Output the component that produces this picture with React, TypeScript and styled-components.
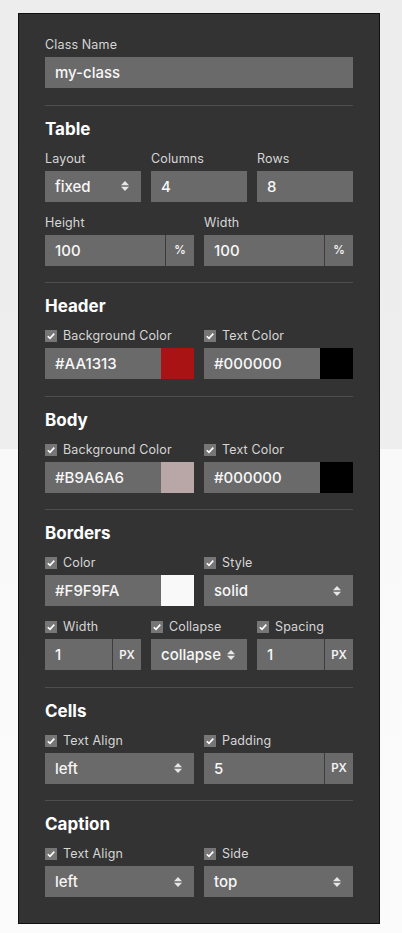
import React from "react";
import styled, { createGlobalStyle } from "styled-components";

const Global = createGlobalStyle`
  html, body { margin: 0; padding: 0; }
  body {
    font-family: Inter, "Noto Sans", Arial, sans-serif;
    background: linear-gradient(to bottom, #ededee 0, #eeeeef 449px, #f9f9f9 449px, #fbfbfb 100%);
    min-height: 933px;
  }
  * { box-sizing: border-box; }
`;

const Page = styled.div`
  padding: 13px 0 9px 18px;
`;

const Panel = styled.div`
  width: 362px;
  background: #333333;
  border: 1px solid #111;
  padding: 23px 26px 26px 26px;
  display: flex;
  flex-direction: column;
`;

const Section = styled.section`
  display: flex;
  flex-direction: column;
`;

const Divider = styled.hr`
  border: none;
  height: 1px;
  background: #4e4e4e;
  margin: 16.5px 0 12px;
  width: 100%;
`;

const Heading = styled.h2`
  margin: 0 0 11px;
  font-size: 17px;
  line-height: 22px;
  font-weight: 700;
  color: #ffffff;
`;

const Grid = styled.div<{ $cols: number }>`
  display: grid;
  grid-template-columns: repeat(${(p) => p.$cols}, 1fr);
  column-gap: 10px;
  row-gap: 13px;
  & + & { margin-top: 13px; }
`;

const Field = styled.div`
  display: flex;
  flex-direction: column;
  gap: 4px;
  min-width: 0;
`;

const Label = styled.label`
  display: flex;
  align-items: center;
  gap: 6px;
  height: 16px;
  font-size: 12.5px;
  line-height: 16px;
  color: #d6d6d6;
  letter-spacing: 0.15px;
`;

const Check = styled.span`
  width: 12px;
  height: 12px;
  background: #767676;
  display: inline-flex;
  align-items: center;
  justify-content: center;
  flex: none;
`;

const Control = styled.div`
  height: 31px;
  background: #6a6a6a;
  display: flex;
  align-items: stretch;
  color: #f7f7f7;
  font-size: 15px;
  font-weight: 500;
`;

const Value = styled.span`
  flex: 1;
  display: flex;
  align-items: center;
  padding-left: 10px;
  min-width: 0;
`;

const Unit = styled.span`
  width: 29px;
  flex: none;
  border-left: 1px solid #3c3c3c;
  display: flex;
  align-items: center;
  justify-content: center;
  font-size: 11.5px;
  font-weight: 600;
  color: #f2f2f2;
`;

const Swatch = styled.span<{ $color: string }>`
  width: 33px;
  flex: none;
  background: ${(p) => p.$color};
`;

const Arrow = styled.span`
  display: flex;
  align-items: center;
  padding-right: 12px;
`;

const CheckIcon = () => (
  <svg width="10" height="10" viewBox="0 0 10 10">
    <path d="M1.8 5.2 L4 7.4 L8.3 2.6" fill="none" stroke="#ffffff" strokeWidth="1.6" />
  </svg>
);

const SelectArrows = () => (
  <svg width="8" height="10" viewBox="0 0 8 10">
    <path d="M0 4.2 L4 0 L8 4.2 Z" fill="#e6e6e6" />
    <path d="M0 5.8 L8 5.8 L4 10 Z" fill="#e6e6e6" />
  </svg>
);

type FieldProps = {
  label: string;
  checked?: boolean;
  children: React.ReactNode;
};

const FormField = ({ label, checked, children }: FieldProps) => (
  <Field>
    <Label>
      {checked && (
        <Check>
          <CheckIcon />
        </Check>
      )}
      {label}
    </Label>
    {children}
  </Field>
);

const TextInput = ({ value, unit }: { value: string; unit?: string }) => (
  <Control>
    <Value>{value}</Value>
    {unit && <Unit>{unit}</Unit>}
  </Control>
);

const Select = ({ value }: { value: string }) => (
  <Control>
    <Value>{value}</Value>
    <Arrow>
      <SelectArrows />
    </Arrow>
  </Control>
);

const ColorInput = ({ value, color }: { value: string; color: string }) => (
  <Control>
    <Value>{value}</Value>
    <Swatch $color={color} />
  </Control>
);

export default function App() {
  return (
    <Page>
      <Global />
      <Panel>
        <Section>
          <FormField label="Class Name">
            <TextInput value="my-class" />
          </FormField>
        </Section>

        <Divider />
        <Section>
          <Heading>Table</Heading>
          <Grid $cols={3}>
            <FormField label="Layout">
              <Select value="fixed" />
            </FormField>
            <FormField label="Columns">
              <TextInput value="4" />
            </FormField>
            <FormField label="Rows">
              <TextInput value="8" />
            </FormField>
          </Grid>
          <Grid $cols={2}>
            <FormField label="Height">
              <TextInput value="100" unit="%" />
            </FormField>
            <FormField label="Width">
              <TextInput value="100" unit="%" />
            </FormField>
          </Grid>
        </Section>

        <Divider />
        <Section>
          <Heading>Header</Heading>
          <Grid $cols={2}>
            <FormField label="Background Color" checked>
              <ColorInput value="#AA1313" color="#aa1313" />
            </FormField>
            <FormField label="Text Color" checked>
              <ColorInput value="#000000" color="#000000" />
            </FormField>
          </Grid>
        </Section>

        <Divider />
        <Section>
          <Heading>Body</Heading>
          <Grid $cols={2}>
            <FormField label="Background Color" checked>
              <ColorInput value="#B9A6A6" color="#b9a6a6" />
            </FormField>
            <FormField label="Text Color" checked>
              <ColorInput value="#000000" color="#000000" />
            </FormField>
          </Grid>
        </Section>

        <Divider />
        <Section>
          <Heading>Borders</Heading>
          <Grid $cols={2}>
            <FormField label="Color" checked>
              <ColorInput value="#F9F9FA" color="#f9f9fa" />
            </FormField>
            <FormField label="Style" checked>
              <Select value="solid" />
            </FormField>
          </Grid>
          <Grid $cols={3}>
            <FormField label="Width" checked>
              <TextInput value="1" unit="PX" />
            </FormField>
            <FormField label="Collapse" checked>
              <Select value="collapse" />
            </FormField>
            <FormField label="Spacing" checked>
              <TextInput value="1" unit="PX" />
            </FormField>
          </Grid>
        </Section>

        <Divider />
        <Section>
          <Heading>Cells</Heading>
          <Grid $cols={2}>
            <FormField label="Text Align" checked>
              <Select value="left" />
            </FormField>
            <FormField label="Padding" checked>
              <TextInput value="5" unit="PX" />
            </FormField>
          </Grid>
        </Section>

        <Divider />
        <Section>
          <Heading>Caption</Heading>
          <Grid $cols={2}>
            <FormField label="Text Align" checked>
              <Select value="left" />
            </FormField>
            <FormField label="Side" checked>
              <Select value="top" />
            </FormField>
          </Grid>
        </Section>
      </Panel>
    </Page>
  );
}
